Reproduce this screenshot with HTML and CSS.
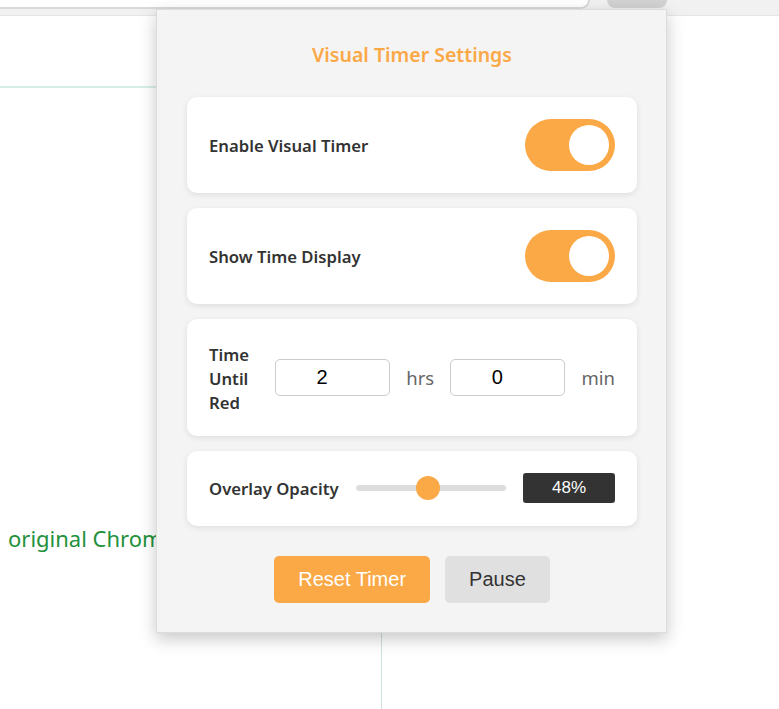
FILE: index.html
```html
<!DOCTYPE html>
<html lang="en">
<head>
<meta charset="utf-8">
<title>Visual Timer Settings</title>
<link rel="stylesheet" href="styles.css">
</head>
<body>
<div class="toolbar">
  <div class="omnibox"></div>
  <div class="tab-chip"></div>
</div>
<div class="page">
  <div class="left-col">
    <div class="left-head"></div>
    <p class="green-text">original Chrome new tab page</p>
  </div>
  <div class="right-col"></div>
</div>

<div class="popup">
  <h1 class="title">Visual Timer Settings</h1>
  <div class="cards">
    <div class="card">
      <span class="label">Enable Visual Timer</span>
      <span class="toggle"><span class="knob"></span></span>
    </div>
    <div class="card">
      <span class="label">Show Time Display</span>
      <span class="toggle"><span class="knob"></span></span>
    </div>
    <div class="card card-time">
      <span class="label label-time">Time Until Red</span>
      <input class="num" type="text" value="2">
      <span class="unit">hrs</span>
      <input class="num" type="text" value="0">
      <span class="unit">min</span>
    </div>
    <div class="card card-opacity">
      <span class="label label-grow">Overlay Opacity</span>
      <input class="range" type="range" min="0" max="100" value="48">
      <span class="value">48%</span>
    </div>
  </div>
  <div class="actions">
    <button class="btn btn-primary">Reset Timer</button>
    <button class="btn btn-secondary">Pause</button>
  </div>
</div>
</body>
</html>
```
FILE: styles.css
```css
html, body {
  margin: 0;
  padding: 0;
  background: #ffffff;
  height: 100%;
  overflow: hidden;
}
body {
  font-family: "Noto Sans", "Open Sans", sans-serif;
}
.toolbar {
  height: 15px;
  background: #f1f1f1;
  border-bottom: 1px solid #e6e6e6;
  display: flex;
  align-items: flex-start;
}
.omnibox {
  width: 588px;
  height: 7px;
  background: #ffffff;
  border-bottom: 2px solid #d9d9d9;
  border-right: 2px solid #d9d9d9;
  border-bottom-right-radius: 12px;
}
.tab-chip {
  margin-left: 17px;
  width: 60px;
  height: 8px;
  background: #d2d2d2;
  border-bottom-left-radius: 8px;
  border-bottom-right-radius: 8px;
}
.page {
  display: flex;
  height: 693px;
}
.left-col {
  width: 381px;
  border-right: 1px solid #cfe1dd;
}
.left-head {
  height: 70px;
  border-bottom: 2px solid #d7eee7;
}
.green-text {
  margin: 435px 0 0 8px;
  font-size: 22px;
  line-height: 30px;
  color: #23913b;
  white-space: nowrap;
}
.right-col {
  flex: 1;
}

.popup {
  position: absolute;
  left: 156px;
  top: 9px;
  width: 511px;
  box-sizing: border-box;
  background: #f4f4f4;
  border: 1px solid #dcdcdc;
  padding: 31px 29px 29px 30px;
  box-shadow: 0 6px 16px rgba(0, 0, 0, 0.22);
}
.title {
  margin: 0 0 28px;
  text-align: center;
  font-size: 19.5px;
  line-height: 28px;
  font-weight: 600;
  color: #fba846;
}
.cards {
  display: flex;
  flex-direction: column;
  gap: 15px;
}
.card {
  background: #ffffff;
  border-radius: 10px;
  box-shadow: 0 2px 6px rgba(0, 0, 0, 0.09);
  padding: 22px;
  display: flex;
  align-items: center;
  justify-content: space-between;
}
.label {
  font-size: 16.7px;
  line-height: 24px;
  padding-top: 2px;
  font-weight: 600;
  color: #333333;
}
.toggle {
  width: 90px;
  height: 52px;
  border-radius: 26px;
  background: #fba846;
  display: flex;
  align-items: center;
  justify-content: flex-end;
  padding-right: 6px;
  box-sizing: border-box;
}
.knob {
  width: 40px;
  height: 40px;
  border-radius: 50%;
  background: #ffffff;
}
.card-time {
  padding-top: 20px;
  padding-bottom: 21px;
}
.label-time {
  width: 50px;
  padding-top: 4px;
}
.num {
  width: 115px;
  height: 37px;
  box-sizing: border-box;
  border: 1px solid #cccccc;
  border-radius: 5px;
  padding: 0 29px 0 8px;
  text-align: center;
  font-family: "Liberation Sans", Arial, sans-serif;
  font-size: 20px;
  color: #000000;
  background: #ffffff;
  margin: 0;
}
.unit {
  font-size: 18.5px;
  color: #666666;
}
.card-opacity {
  gap: 17px;
  padding-bottom: 23px;
}
.label-grow {
  flex: 1;
}
.range {
  -webkit-appearance: none;
  appearance: none;
  width: 150px;
  height: 24px;
  margin: 0;
  background: transparent;
}
.range::-webkit-slider-runnable-track {
  height: 6px;
  border-radius: 3px;
  background: #dddddd;
}
.range::-webkit-slider-thumb {
  -webkit-appearance: none;
  appearance: none;
  width: 24px;
  height: 24px;
  border-radius: 50%;
  background: #fba846;
  border: none;
  margin-top: -9px;
}
.value {
  width: 92px;
  height: 30px;
  border-radius: 3px;
  background: #333333;
  color: #ffffff;
  font-family: "Liberation Sans", Arial, sans-serif;
  font-size: 17px;
  line-height: 30px;
  text-align: center;
}
.actions {
  margin-top: 30px;
  display: flex;
  justify-content: center;
  gap: 15px;
}
.btn {
  height: 47px;
  padding: 0 24px;
  border: none;
  border-radius: 5px;
  font-family: "Liberation Sans", Arial, sans-serif;
  font-size: 20px;
  cursor: pointer;
}
.btn-primary {
  background: #fba846;
  color: #ffffff;
}
.btn-secondary {
  background: #e0e0e0;
  color: #333333;
}
```
